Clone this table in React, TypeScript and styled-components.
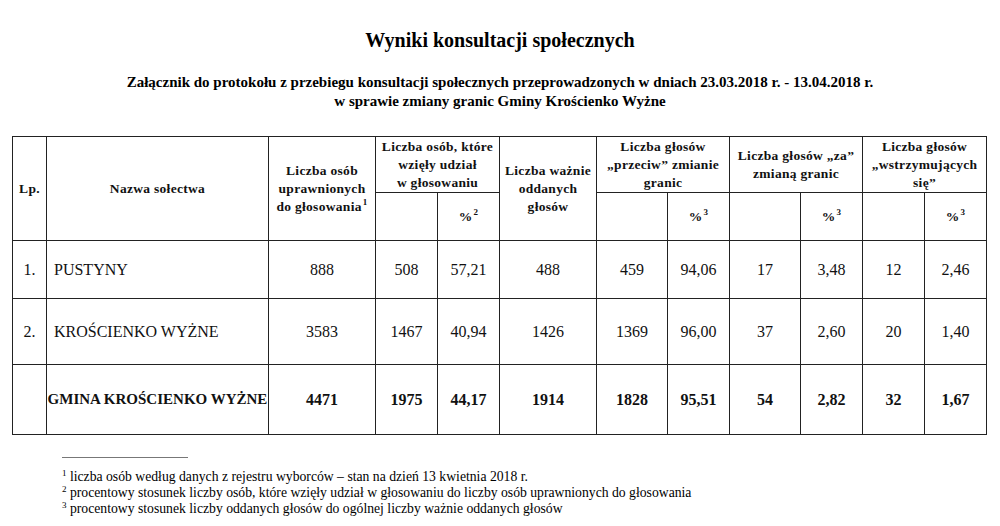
import styled, { createGlobalStyle } from 'styled-components'

const GlobalStyle = createGlobalStyle`
    html, body {
        margin: 0;
        padding: 0;
        background: #fff;
    }

    body {
        font-family: "Liberation Serif", "Times New Roman", serif;
        color: #000;
    }
`

type Row = {
    lp: string
    name: string
    values: string[]
    total?: boolean
}

const rows: Row[] = [
    { lp: '1.', name: 'PUSTYNY', values: ['888', '508', '57,21', '488', '459', '94,06', '17', '3,48', '12', '2,46'] },
    { lp: '2.', name: 'KROŚCIENKO WYŻNE', values: ['3583', '1467', '40,94', '1426', '1369', '96,00', '37', '2,60', '20', '1,40'] },
    { lp: '', name: 'GMINA KROŚCIENKO WYŻNE', values: ['4471', '1975', '44,17', '1914', '1828', '95,51', '54', '2,82', '32', '1,67'], total: true },
]

const colWidths = [34, 222, 107, 62, 62, 97, 71, 62, 71, 62, 62, 62]
const rowHeights = [58, 66, 70]

const notes = [
    { mark: '1', text: 'liczba osób według danych z rejestru wyborców – stan na dzień 13 kwietnia 2018 r.' },
    { mark: '2', text: 'procentowy stosunek liczby osób, które wzięły udział w głosowaniu do liczby osób uprawnionych do głosowania' },
    { mark: '3', text: 'procentowy stosunek liczby oddanych głosów do ogólnej liczby ważnie oddanych głosów' },
]

export default function App() {
    return (
        <Page>
            <GlobalStyle />
            <Title>Wyniki konsultacji społecznych</Title>
            <Subtitle>
                Załącznik do protokołu z przebiegu konsultacji społecznych przeprowadzonych w dniach 23.03.2018 r. - 13.04.2018 r.
                <br />
                w sprawie zmiany granic Gminy Krościenko Wyżne
            </Subtitle>

            <Table>
                <colgroup>
                    {colWidths.map((w, i) => <col key={i} style={{ width: w }} />)}
                </colgroup>
                <thead>
                    <HeadRow $height={56}>
                        <HeadCell rowSpan={2}>Lp.</HeadCell>
                        <HeadCell rowSpan={2}>Nazwa sołectwa</HeadCell>
                        <HeadCell rowSpan={2}>Liczba osób<br />uprawnionych<br />do głosowania<Sup>1</Sup></HeadCell>
                        <HeadCell colSpan={2}>Liczba osób, które<br />wzięły udział<br />w głosowaniu</HeadCell>
                        <HeadCell rowSpan={2}>Liczba ważnie<br />oddanych<br />głosów</HeadCell>
                        <HeadCell colSpan={2}>Liczba głosów<br />„przeciw” zmianie<br />granic</HeadCell>
                        <HeadCell colSpan={2}>Liczba głosów „za”<br />zmianą granic</HeadCell>
                        <HeadCell colSpan={2}>Liczba głosów<br />„wstrzymujących<br />się”</HeadCell>
                    </HeadRow>
                    <HeadRow $height={48}>
                        <HeadCell />
                        <HeadCell>%<Sup>2</Sup></HeadCell>
                        <HeadCell />
                        <HeadCell>%<Sup>3</Sup></HeadCell>
                        <HeadCell />
                        <HeadCell>%<Sup>3</Sup></HeadCell>
                        <HeadCell />
                        <HeadCell>%<Sup>3</Sup></HeadCell>
                    </HeadRow>
                </thead>
                <tbody>
                    {rows.map((row, i) => (
                        <BodyRow key={i} $height={rowHeights[i]}>
                            <Cell $total={row.total}>{row.lp}</Cell>
                            <NameCell $total={row.total}>{row.name}</NameCell>
                            {row.values.map((v, j) => <Cell key={j} $total={row.total}>{v}</Cell>)}
                        </BodyRow>
                    ))}
                </tbody>
            </Table>

            <Footnotes>
                <Rule />
                {notes.map(n => (
                    <Note key={n.mark}><NoteMark>{n.mark}</NoteMark> {n.text}</Note>
                ))}
            </Footnotes>
        </Page>
    )
}

const Page = styled.div`
    width: 1000px;
    height: 526px;
    padding-top: 28px;
    box-sizing: border-box;
    overflow: hidden;
`

const Title = styled.h1`
    margin: 0;
    font-size: 20px;
    line-height: 24px;
    font-weight: 700;
    text-align: center;
`

const Subtitle = styled.p`
    margin: 21px 0 0;
    font-size: 15px;
    line-height: 19px;
    font-weight: 700;
    text-align: center;
`

const Table = styled.table`
    margin: 25px 0 0 12px;
    width: 975px;
    table-layout: fixed;
    border-collapse: collapse;
    font-family: "Liberation Serif", "Times New Roman", serif;
    color: #111;
`

const HeadRow = styled.tr<{ $height: number }>`
    height: ${p => p.$height}px;
`

const HeadCell = styled.th`
    border: 1px solid #222;
    padding: 0;
    font-family: "Liberation Serif", "Times New Roman", serif;
    font-size: 13.5px;
    line-height: 18px;
    letter-spacing: 0.3px;
    font-weight: 700;
    text-align: center;
    vertical-align: middle;
`

const Sup = styled.sup`
    font-size: 9px;
    line-height: 0;
    vertical-align: 6px;
    margin-left: 1px;
`

const BodyRow = styled.tr<{ $height: number }>`
    height: ${p => p.$height}px;
`

const Cell = styled.td<{ $total?: boolean }>`
    border: 1px solid #222;
    padding: 0;
    font-family: "Liberation Serif", "Times New Roman", serif;
    font-size: 16px;
    font-weight: ${p => (p.$total ? 700 : 400)};
    text-align: center;
    vertical-align: middle;
`

const NameCell = styled(Cell)`
    text-align: ${p => (p.$total ? 'center' : 'left')};
    padding-left: ${p => (p.$total ? 0 : 7)}px;
    font-size: ${p => (p.$total ? 15 : 16)}px;
    white-space: nowrap;
`

const Footnotes = styled.div`
    margin: 22px 0 0 62px;
`

const Rule = styled.div`
    width: 126px;
    border-top: 1px solid #777;
    margin-bottom: 11px;
`

const Note = styled.div`
    font-size: 13.7px;
    line-height: 16px;
`

const NoteMark = styled.sup`
    font-size: 9px;
    line-height: 0;
    vertical-align: 5px;
`
